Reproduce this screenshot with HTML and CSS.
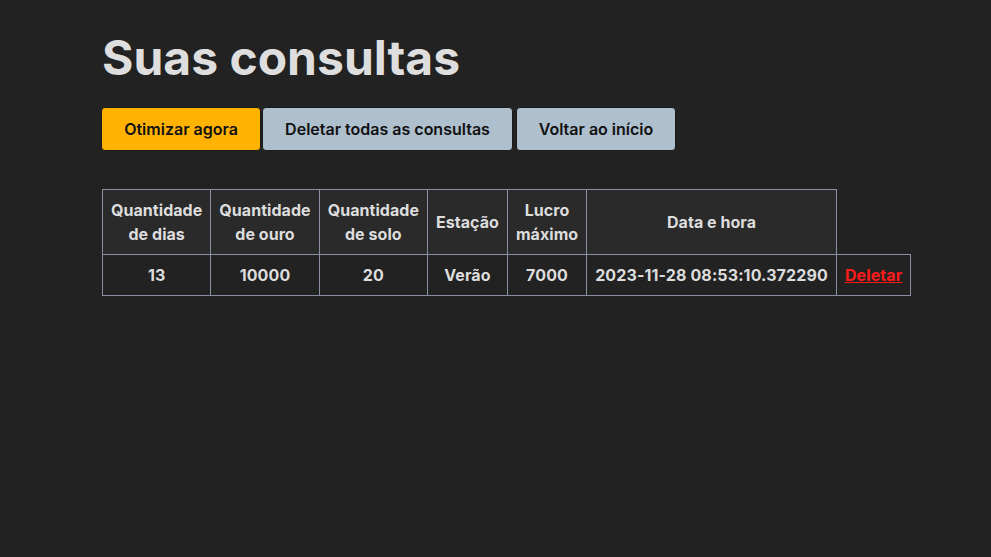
FILE: index.html
```html
<!DOCTYPE html>
<html lang="pt-BR">
<head>
<meta charset="utf-8">
<title>Suas consultas</title>
<link rel="stylesheet" href="styles.css">
</head>
<body>
<main class="page">
  <h1 class="title">Suas consultas</h1>
  <div class="actions">
    <button class="btn btn-primary">Otimizar agora</button>
    <button class="btn btn-secondary btn-wide">Deletar todas as consultas</button>
    <button class="btn btn-secondary">Voltar ao início</button>
  </div>
  <table class="results">
    <thead>
      <tr>
        <th>Quantidade<br>de dias</th>
        <th>Quantidade<br>de ouro</th>
        <th>Quantidade<br>de solo</th>
        <th>Estação</th>
        <th>Lucro<br>máximo</th>
        <th>Data e hora</th>
      </tr>
    </thead>
    <tbody>
      <tr>
        <td>13</td>
        <td>10000</td>
        <td>20</td>
        <td>Verão</td>
        <td>7000</td>
        <td>2023-11-28 08:53:10.372290</td>
        <td><a href="#" class="del">Deletar</a></td>
      </tr>
    </tbody>
  </table>
</main>
</body>
</html>
```

FILE: styles.css
```css
html, body {
  margin: 0;
  background: #222222;
}
body {
  font-family: Inter, "Noto Sans", sans-serif;
  color: #dddddd;
}
.page {
  padding: 29px 40px 29px 101px;
}
.title {
  margin: 0 0 20px 1px;
  font-size: 48px;
  font-weight: 700;
  line-height: 58px;
  color: #dedede;
}
.actions {
  display: flex;
  margin-bottom: 38px;
}
.btn {
  box-sizing: border-box;
  height: 44px;
  border: 1px solid #1a1a1a;
  border-radius: 4px;
  font-family: Inter, sans-serif;
  font-size: 16px;
  font-weight: 600;
  color: #111111;
  padding: 0 20px;
  cursor: pointer;
  margin-right: 1px;
}
.btn-primary {
  background: #ffb300;
  width: 160px;
}
.btn-secondary {
  background: #aebfcd;
  width: 160px;
}
.btn-wide {
  width: 251px;
  margin-right: 3px;
}
.results {
  border-collapse: collapse;
  margin-left: 1px;
  font-size: 16px;
  font-weight: 700;
  line-height: 24px;
}
.results th, .results td {
  border: 1px solid #8b8fa3;
  padding: 8px 8px;
  text-align: center;
}
.results th {
  background: #2a2a2a;
  color: #dddddd;
  letter-spacing: 0.05px;
}
.results td {
  white-space: nowrap;
  color: #dddddd;
  letter-spacing: 0.12px;
}
.del {
  color: #ff1a1a;
}
```
